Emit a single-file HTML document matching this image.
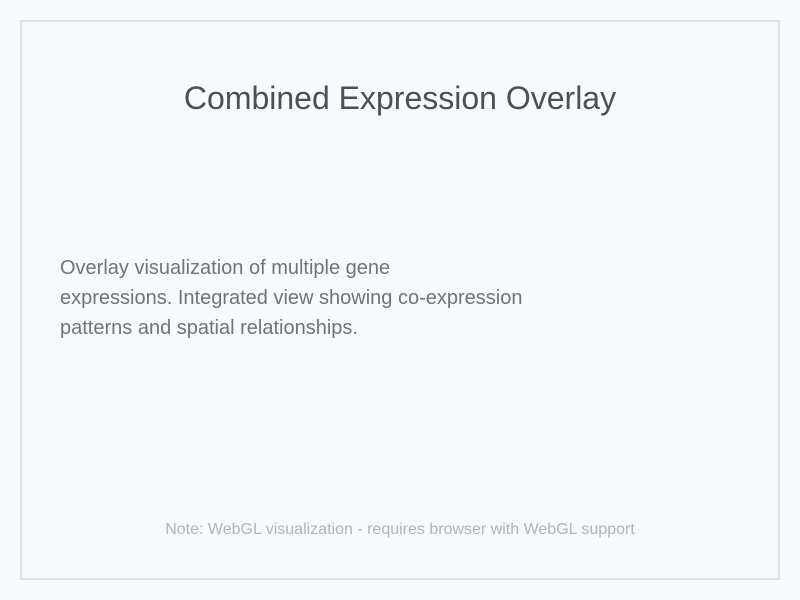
<!DOCTYPE html>
<html><head><meta charset="utf-8"><style>
html,body{margin:0;padding:0;width:800px;height:600px;background:#f8f9fa;overflow:hidden}
body{font-family:"Liberation Sans",Arial,sans-serif;position:relative}
.box{position:absolute;left:20px;top:20px;width:756px;height:556px;border:2px solid #dee2e6;background:#f8f9fa}
h1{position:absolute;left:0;width:800px;top:79px;margin:0;text-align:center;font-weight:normal;font-size:32px;color:#495057;line-height:38px}
.desc{position:absolute;left:60px;top:253px;font-size:20px;line-height:30px;color:#6c757d}
.note{position:absolute;left:0;width:800px;top:520px;text-align:center;font-size:16px;color:#adb5bd;line-height:20px}
</style></head><body>
<div class="box"></div>
<h1>Combined Expression Overlay</h1>
<div class="desc">Overlay visualization of multiple gene<br>expressions. Integrated view showing co-expression<br>patterns and spatial relationships.</div>
<div class="note">Note: WebGL visualization - requires browser with WebGL support</div>
</body></html>
